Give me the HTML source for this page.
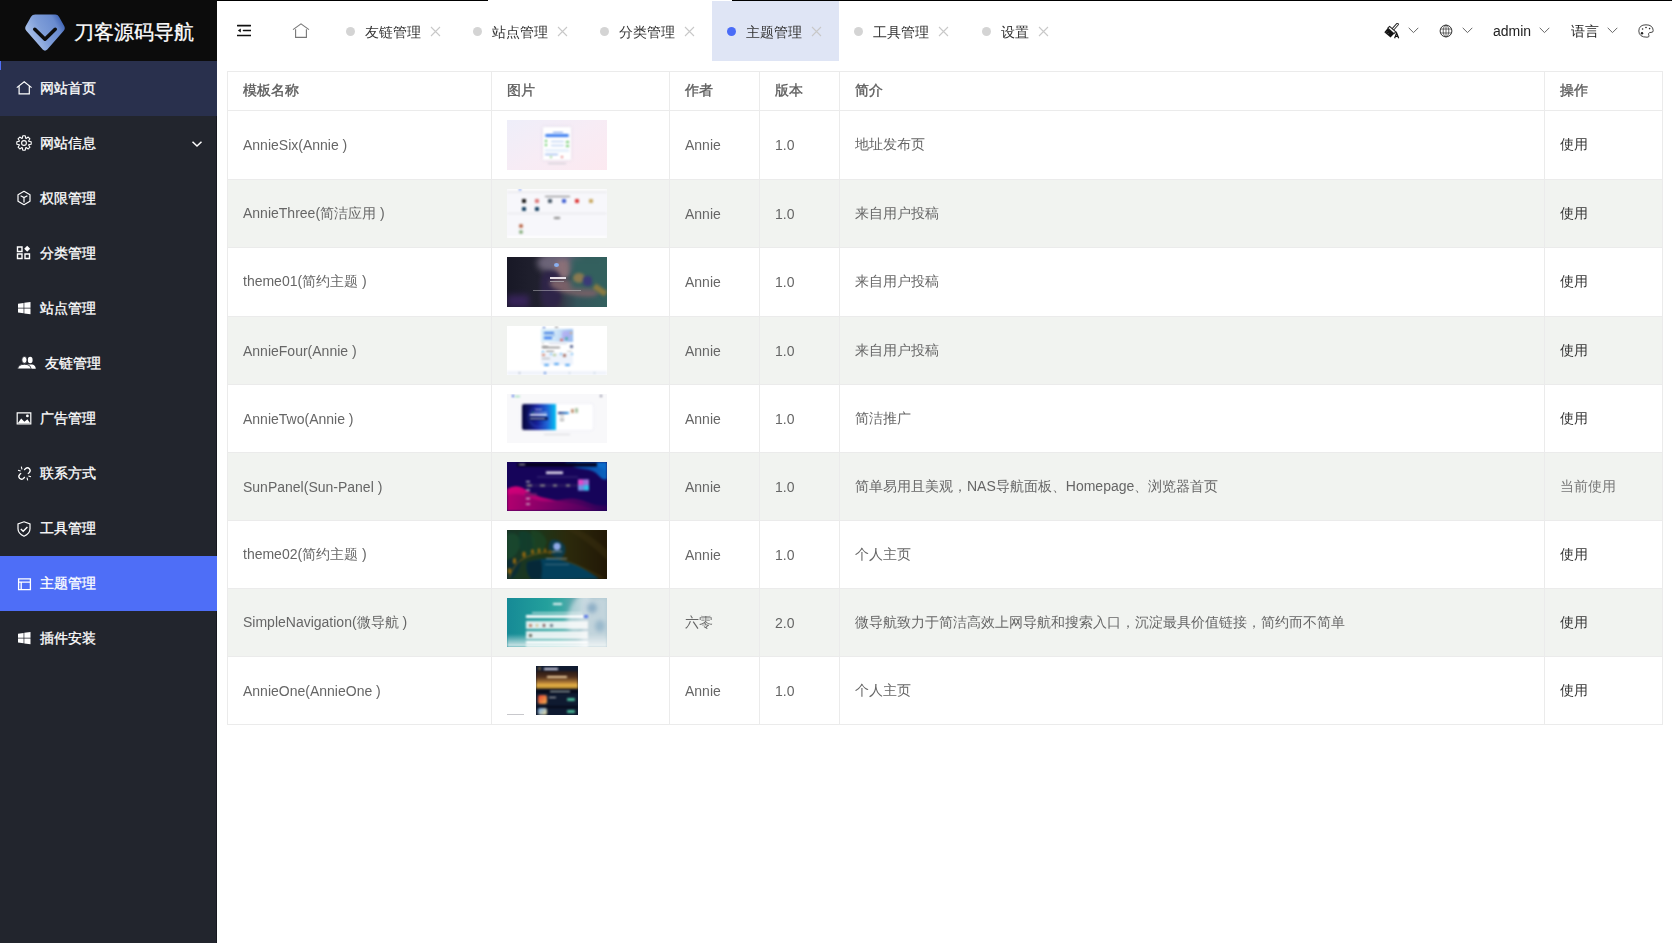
<!DOCTYPE html>
<html><head><meta charset="utf-8">
<style>
*{box-sizing:border-box;margin:0;padding:0}
html,body{width:1672px;height:943px;overflow:hidden;background:#fff;font-family:"Liberation Sans",sans-serif;font-size:14px}
#side{position:absolute;left:0;top:0;width:217px;height:943px;background:#22252d}
#logo{position:absolute;left:0;top:0;width:217px;height:61px;background:#0c0c0c}
#logo .t{position:absolute;left:74px;top:20px;font-size:20px;line-height:24px;color:#fff;white-space:nowrap;-webkit-text-stroke:0.3px #fff}
.mi{position:absolute;left:0;width:217px;height:55px;color:#fff;font-size:14px}
.mi .tx{position:absolute;left:40px;top:18px;line-height:18px;white-space:nowrap;-webkit-text-stroke:0.3px #fff}
.mi svg{position:absolute}
.topline{position:absolute;top:0;height:1px;background:#000}
#hdr{position:absolute;left:217px;top:0;width:1455px;height:61px;will-change:transform}
.tab{position:absolute;top:1px;height:60px;width:127px}
.tab .dot{position:absolute;left:15px;top:26px;width:9px;height:9px;border-radius:50%;background:#d4d4d4}
.tab .tt{position:absolute;left:34px;top:21.5px;line-height:18px;color:#333;white-space:nowrap}
.tab svg{position:absolute;left:99px;top:25px}
#tw{position:absolute;left:227px;top:71px;will-change:transform}
table{border-collapse:collapse;table-layout:fixed}
td,th{border:1px solid #ebebeb;text-align:left;padding:0 15px;color:#666;font-weight:normal;white-space:nowrap}
th{height:39px;font-weight:normal;-webkit-text-stroke:0.35px #5c5c5c}
td{height:68px}
tr.h69 td{height:69px}
tr.s td{background:#f1f3f0}

td.u{color:#333}
td.c{color:#777}
th{color:#5c5c5c}
.th{position:relative;display:block;width:100px;height:50px;overflow:hidden}
.th i{position:absolute;display:block;filter:blur(.85px)}
.t1{background:linear-gradient(150deg,#eeeef9 0%,#f7ecf5 50%,#fce9f0 100%)}
.t2{height:49px;background:#f7f7fb}
.t3{background:linear-gradient(90deg,#181826 0%,#20202e 30%,#343042 50%,#34545a 70%,#33605e 100%)}
.t4{height:49px;background:#fff}
.t5{height:49px;background:#f8f8fa}
.t6{height:49px;background:#17045c}
.t7{height:49px;background:radial-gradient(ellipse 35px 20px at 50% 85%,#044060 0%,rgba(4,64,96,0) 100%),linear-gradient(100deg,#1a3020 0%,#24321a 30%,#2e2a0c 60%,#231a06 100%)}
.t8{height:49px;background:linear-gradient(90deg,#168a96 0%,#23a09c 40%,#3aa8a4 55%,#6aa8b0 68%,#a8c4cc 80%,#b0c8d0 100%)}
.t9w{position:relative;width:100px;height:49px}
.t9{position:absolute;left:29px;top:0;width:42px;height:49px;background:#0f1a30;overflow:hidden}
.t9 i{position:absolute;display:block;filter:blur(.85px)}

</style></head><body>
<div id="side">
  <div style="position:absolute;left:216px;top:61px;width:1px;height:882px;background:#16181f"></div>
  <div id="logo">
    <svg style="position:absolute;left:25px;top:14px" width="41" height="38" viewBox="0 0 41 38"><defs><linearGradient id="lg" x1="0" y1="0.85" x2="1" y2="0.35"><stop offset="0" stop-color="#c0d4f4"/><stop offset="0.5" stop-color="#7e9dd8"/><stop offset="0.85" stop-color="#6a8cd0"/><stop offset="1" stop-color="#4468b8"/></linearGradient></defs><path d="M10.2 0.6 H30.3 Q32.8 0.6 34 2.8 L39.2 12 Q40.6 14.6 38.7 16.8 L22.3 35.5 Q20 37.8 17.7 35.5 L1.3 16.8 Q-0.6 14.6 0.8 12 L6 2.8 Q7.4 0.6 10.2 0.6Z" fill="url(#lg)"/><path d="M9.8 15.3 L20 25.2 L30.2 15.3" fill="none" stroke="#0c0c0c" stroke-width="3.6" stroke-linecap="round" stroke-linejoin="round"/></svg>
    <div class="t">刀客源码导航</div>
  </div>
  <div class="mi" style="top:61px;background:#29304d"><div style="position:absolute;left:0;top:0;width:1px;height:9px;background:#4f6ef7"></div>
    <svg style="left:16px;top:19px" width="17" height="16" viewBox="0 0 17 16"><path d="M0.8 7.6 L8.2 1.8 L15.6 7.6 M3.1 6.2 V13.9 H13.3 V6.2" fill="none" stroke="#fff" stroke-width="1.2"/></svg>
    <div class="tx">网站首页</div></div>
  <div class="mi" style="top:116px">
    <svg style="left:16px;top:19px" width="16" height="16" viewBox="0 0 16 16"><circle cx="8" cy="8" r="2.4" fill="none" stroke="#fff" stroke-width="1.1"/><path d="M6.24 3.32 L6.76 0.81 L9.24 0.81 L9.76 3.32 L10.06 3.45 L12.21 2.04 L13.96 3.79 L12.55 5.94 L12.68 6.24 L15.19 6.76 L15.19 9.24 L12.68 9.76 L12.55 10.06 L13.96 12.21 L12.21 13.96 L10.06 12.55 L9.76 12.68 L9.24 15.19 L6.76 15.19 L6.24 12.68 L5.94 12.55 L3.79 13.96 L2.04 12.21 L3.45 10.06 L3.32 9.76 L0.81 9.24 L0.81 6.76 L3.32 6.24 L3.45 5.94 L2.04 3.79 L3.79 2.04 L5.94 3.45Z" fill="none" stroke="#fff" stroke-width="1.1" stroke-linejoin="round"/></svg>
    <div class="tx">网站信息</div>
    <svg style="left:191px;top:24px" width="12" height="8" viewBox="0 0 12 8"><path d="M1.5 1.8 L6 6 L10.5 1.8" fill="none" stroke="#fff" stroke-width="1.5"/></svg></div>
  <div class="mi" style="top:171px">
    <svg style="left:16px;top:19px" width="16" height="16" viewBox="0 0 16 16"><path d="M8 1.3 L14 4.7 V11.3 L8 14.7 L2 11.3 V4.7Z" fill="none" stroke="#fff" stroke-width="1.2" stroke-linejoin="round"/><path d="M4.6 5.8 L8 7.6 L11.4 5.8 M8 7.6 V12.6" fill="none" stroke="#fff" stroke-width="1.2"/></svg>
    <div class="tx">权限管理</div></div>
  <div class="mi" style="top:226px">
    <svg style="left:16px;top:19px" width="16" height="16" viewBox="0 0 16 16"><path d="M1.5 2 H6 V6.5 H1.5Z M1.5 9 H6 V13.5 H1.5Z M9 9 H13.5 V13.5 H9Z" fill="none" stroke="#fff" stroke-width="1.4"/><path d="M11.2 0.8 L14.2 3.8 L11.2 6.8 L8.2 3.8Z" fill="#fff"/></svg>
    <div class="tx">分类管理</div></div>
  <div class="mi" style="top:281px">
    <svg style="left:18px;top:21px" width="13" height="13" viewBox="0 0 13 13"><path d="M0 1.7 L5.6 0.9 V5.8 H0Z M6.3 0.8 L12.5 0 V5.8 H6.3Z M0 6.5 H5.6 V11.3 L0 10.6Z M6.3 6.5 H12.5 V12.3 L6.3 11.4Z" fill="#fff"/></svg>
    <div class="tx">站点管理</div></div>
  <div class="mi" style="top:336px">
    <svg style="left:17px;top:20px" width="20" height="14" viewBox="0 0 20 14"><ellipse cx="13.2" cy="4" rx="2.4" ry="3.3" fill="#fff"/><path d="M11 8.6 Q13.2 8.2 15.4 8.6 Q18.6 9.4 18.8 12.8 H13Z" fill="#fff"/><ellipse cx="7.4" cy="3.9" rx="2.6" ry="3.4" fill="#fff" stroke="#22252d" stroke-width="0.8"/><path d="M0.6 12.9 Q0.9 9.4 4.6 8.6 Q7.4 8 10.2 8.6 Q13.9 9.4 14.2 12.9Z" fill="#fff" stroke="#22252d" stroke-width="0.8"/></svg>
    <div class="tx" style="left:45px">友链管理</div></div>
  <div class="mi" style="top:391px">
    <svg style="left:16px;top:21px" width="16" height="13" viewBox="0 0 16 13"><path d="M1.2 0.9 H14.8 V12 H1.2Z" fill="none" stroke="#fff" stroke-width="1.2"/><path d="M1.6 11.6 L5.2 6.4 L8.4 9.8 L11.4 7.2 L14.4 11.6Z" fill="#fff"/><circle cx="11.4" cy="3.9" r="1.4" fill="#fff"/></svg>
    <div class="tx">广告管理</div></div>
  <div class="mi" style="top:446px">
    <svg style="left:17px;top:20px" width="15" height="15" viewBox="0 0 15 15"><path d="M7.2 4 L8.6 2.6 Q10.6 0.9 12.4 2.7 Q14.1 4.6 12.3 6.5 L10.9 7.9 M7.8 11 L6.4 12.4 Q4.4 14.1 2.6 12.3 Q0.9 10.4 2.7 8.5 L4.1 7.1" fill="none" stroke="#fff" stroke-width="1.3"/><path d="M1 4.2 L3.6 5 M4.3 0.6 L5 3.3 M14 10.8 L11.4 10 M10.7 14.4 L10 11.7" stroke="#fff" stroke-width="1.1"/></svg>
    <div class="tx">联系方式</div></div>
  <div class="mi" style="top:501px">
    <svg style="left:17px;top:20px" width="14" height="16" viewBox="0 0 14 16"><path d="M7 0.8 L13 2.9 V7.8 Q13 12.6 7 15.2 Q1 12.6 1 7.8 V2.9Z" fill="none" stroke="#fff" stroke-width="1.2"/><path d="M3.8 8 L6.2 10.3 L10.4 6" fill="none" stroke="#fff" stroke-width="1.4"/></svg>
    <div class="tx">工具管理</div></div>
  <div class="mi" style="top:556px;background:#4e6ef7">
    <svg style="left:17px;top:22px" width="15" height="13" viewBox="0 0 15 13"><path d="M1.6 0.9 H13.4 V11.6 H1.6Z M1.6 4.2 H13.4 M4.2 4.2 V11.6" fill="none" stroke="#fff" stroke-width="1.3"/></svg>
    <div class="tx">主题管理</div></div>
  <div class="mi" style="top:611px">
    <svg style="left:18px;top:21px" width="13" height="13" viewBox="0 0 13 13"><path d="M0 1.7 L5.6 0.9 V5.8 H0Z M6.3 0.8 L12.5 0 V5.8 H6.3Z M0 6.5 H5.6 V11.3 L0 10.6Z M6.3 6.5 H12.5 V12.3 L6.3 11.4Z" fill="#fff"/></svg>
    <div class="tx">插件安装</div></div>
</div>

<div class="topline" style="left:217px;width:271px"></div>
<div class="topline" style="left:732px;width:940px"></div>

<!-- HEADER -->
<div id="hdr">
  <svg style="position:absolute;left:20px;top:24px" width="14" height="13" viewBox="0 0 14 13"><path d="M0.5 1.6 H13.5 M6.5 6.5 H13.5 M0.5 11.5 H13.5" stroke="#111" stroke-width="1.6" stroke-linecap="round"/><path d="M0.8 6.5 L3.8 4.6 V8.4Z" fill="#111"/></svg>
  <svg style="position:absolute;left:75px;top:23px" width="18" height="16" viewBox="0 0 18 16"><path d="M1 6.6 L9 0.9 L17 6.6 M3.6 6.2 V14.4 H14.4 V6.2" fill="none" stroke="#777" stroke-width="1.1"/></svg>
  <div class="tab" style="left:114px"><div class="dot"></div><div class="tt">友链管理</div><svg width="11" height="11" viewBox="0 0 11 11"><path d="M1 1 L10 10 M10 1 L1 10" stroke="#c8c8c8" stroke-width="1.1"/></svg></div>
  <div class="tab" style="left:241px"><div class="dot"></div><div class="tt">站点管理</div><svg width="11" height="11" viewBox="0 0 11 11"><path d="M1 1 L10 10 M10 1 L1 10" stroke="#c8c8c8" stroke-width="1.1"/></svg></div>
  <div class="tab" style="left:368px"><div class="dot"></div><div class="tt">分类管理</div><svg width="11" height="11" viewBox="0 0 11 11"><path d="M1 1 L10 10 M10 1 L1 10" stroke="#c8c8c8" stroke-width="1.1"/></svg></div>
  <div class="tab" style="left:495px;background:#dfe5f5"><div class="dot" style="background:#4a6cf7"></div><div class="tt">主题管理</div><svg width="11" height="11" viewBox="0 0 11 11"><path d="M1 1 L10 10 M10 1 L1 10" stroke="#c8c8c8" stroke-width="1.1"/></svg></div>
  <div class="tab" style="left:622px"><div class="dot"></div><div class="tt">工具管理</div><svg width="11" height="11" viewBox="0 0 11 11"><path d="M1 1 L10 10 M10 1 L1 10" stroke="#c8c8c8" stroke-width="1.1"/></svg></div>
  <!-- right tools -->
  <svg style="position:absolute;left:1167px;top:23px" width="17" height="17" viewBox="0 0 17 17"><path d="M13.4 1.3 L9.4 5.8" stroke="#222" stroke-width="2.9" stroke-linecap="round"/><path d="M13.4 1.3 L9.4 5.8" stroke="#fff" stroke-width="1.1" stroke-linecap="round"/><path d="M5.6 3.4 L11.8 8.8 L10 10.6 L3.8 5.2Z" fill="#fff" stroke="#222" stroke-width="1.1" stroke-linejoin="round"/><path d="M3.6 5.2 L10.1 10.8 L6.5 14.6 L0.3 9.2Z" fill="#111"/><path d="M2 9.6 L3.2 8.3 M3.7 11.1 L4.8 9.8" stroke="#888" stroke-width="0.6"/><path d="M10.6 15.2 L12.6 10 L14.7 15.2 M11.4 13.4 H13.9" fill="none" stroke="#111" stroke-width="1.2"/></svg>
  <svg style="position:absolute;left:1191px;top:27px" width="11" height="7" viewBox="0 0 11 7"><path d="M0.7 0.8 L5.5 5.6 L10.3 0.8" fill="none" stroke="#666" stroke-width="1"/></svg>
  <svg style="position:absolute;left:1222px;top:24px" width="14" height="14" viewBox="0 0 14 14"><circle cx="7" cy="7" r="5.9" fill="none" stroke="#333" stroke-width="1"/><ellipse cx="7" cy="7" rx="2.8" ry="5.9" fill="none" stroke="#444" stroke-width="0.8"/><path d="M1.3 5 H12.7 M1.3 9 H12.7 M7 1 V13" stroke="#444" stroke-width="0.8"/></svg>
  <svg style="position:absolute;left:1245px;top:27px" width="11" height="7" viewBox="0 0 11 7"><path d="M0.7 0.8 L5.5 5.6 L10.3 0.8" fill="none" stroke="#666" stroke-width="1"/></svg>
  <div style="position:absolute;left:1276px;top:22px;line-height:18px;font-size:14px;color:#222">admin</div>
  <svg style="position:absolute;left:1322px;top:27px" width="11" height="7" viewBox="0 0 11 7"><path d="M0.7 0.8 L5.5 5.6 L10.3 0.8" fill="none" stroke="#666" stroke-width="1"/></svg>
  <div style="position:absolute;left:1354px;top:22px;line-height:18px;font-size:14px;color:#222">语言</div>
  <svg style="position:absolute;left:1390px;top:27px" width="11" height="7" viewBox="0 0 11 7"><path d="M0.7 0.8 L5.5 5.6 L10.3 0.8" fill="none" stroke="#666" stroke-width="1"/></svg>
  <svg style="position:absolute;left:1421px;top:24px" width="16" height="14" viewBox="0 0 16 14"><path d="M8 0.8 Q14.8 0.8 15.2 6.5 Q15.3 8.6 13 8.4 Q11 8.3 10.6 9.6 Q10.4 11 11 11.8 Q11.4 13.2 9 13.2 Q1 13.2 0.8 7 Q1 0.8 8 0.8Z" fill="none" stroke="#333" stroke-width="0.9"/><circle cx="4" cy="9.2" r="1.2" fill="#222"/><circle cx="4.6" cy="5" r="0.8" fill="#222"/><circle cx="8" cy="3.5" r="0.8" fill="#222"/><circle cx="11.6" cy="4.6" r="0.8" fill="#222"/></svg>
  <div class="tab" style="left:750px"><div class="dot"></div><div class="tt">设置</div><svg style="left:71px" width="11" height="11" viewBox="0 0 11 11"><path d="M1 1 L10 10 M10 1 L1 10" stroke="#c8c8c8" stroke-width="1.1"/></svg></div>
</div>

<!-- TABLE -->
<div id="tw"><table>
<colgroup><col style="width:264px"><col style="width:178px"><col style="width:90px"><col style="width:80px"><col style="width:705px"><col style="width:118px"></colgroup>
<tr><th>模板名称</th><th>图片</th><th>作者</th><th>版本</th><th>简介</th><th>操作</th></tr>
<tr class="h69"><td>AnnieSix(Annie )</td><td><div class="th t1"><i style="left:36px;top:7px;width:28px;height:33px;background:#fff;box-shadow:0 0 2px rgba(180,180,200,.5)"></i><i style="left:46px;top:11.5px;width:10px;height:1.5px;background:#5b8ae8"></i><i style="left:38px;top:14px;width:24px;height:3px;background:#3d7ef0;border-radius:2px"></i><i style="left:38px;top:19.5px;width:2px;height:2px;background:#5cc85c"></i><i style="left:44px;top:20.5px;width:13px;height:1px;background:#a8c4f0"></i><i style="left:59px;top:20.5px;width:3px;height:2px;background:#6cc86c"></i><i style="left:38px;top:24px;width:2px;height:2px;background:#5cc85c"></i><i style="left:44px;top:25px;width:13px;height:1px;background:#a8c4f0"></i><i style="left:59px;top:24.5px;width:3px;height:2px;background:#6cc86c"></i><i style="left:38px;top:28.5px;width:24px;height:3px;background:#e6f0fc"></i><i style="left:38px;top:33.5px;width:13px;height:1px;background:#7aa2ea"></i><i style="left:43px;top:36px;width:2px;height:2px;background:#9ad49a"></i><i style="left:54px;top:36px;width:2px;height:2px;background:#e88080"></i><i style="left:41px;top:42.5px;width:18px;height:1px;background:#c8c8d0"></i></div></td><td>Annie</td><td>1.0</td><td>地址发布页</td><td class="u">使用</td></tr>
<tr class="s"><td>AnnieThree(简洁应用 )</td><td><div class="th t2"><i style="left:0;top:0;width:100px;height:2px;background:#fff"></i><i style="left:12px;top:0;width:2px;height:2px;background:#4a7af0"></i><i style="left:0;top:2px;width:100px;height:2px;background:#ededf0"></i><i style="left:38px;top:6.5px;width:25px;height:1.5px;background:#777"></i><i style="left:15px;top:10px;width:4px;height:4px;background:#111;border-radius:1px"></i><i style="left:28px;top:10px;width:4px;height:4px;background:#d77;border-radius:1px"></i><i style="left:41px;top:10px;width:4px;height:4px;background:#456;border-radius:1px"></i><i style="left:55px;top:10px;width:4px;height:4px;background:#3b5bd0;border-radius:1px"></i><i style="left:68px;top:10px;width:4px;height:4px;background:#d33;border-radius:1px"></i><i style="left:82px;top:10px;width:4px;height:4px;background:#c9a860;border-radius:1px"></i><i style="left:15px;top:17.5px;width:4px;height:4px;background:#0d3a5c;border-radius:1px"></i><i style="left:28px;top:17.5px;width:4px;height:4px;background:#0d3a5c;border-radius:1px"></i><i style="left:0;top:23.5px;width:100px;height:1.5px;background:#e6e6ea"></i><i style="left:47px;top:28px;width:6px;height:1.5px;background:#888"></i><i style="left:12px;top:34.5px;width:4px;height:4px;background:#b86040;border-radius:50%"></i><i style="left:12px;top:40.5px;width:4px;height:4px;background:#8ab080;border-radius:50%"></i><i style="left:0;top:47px;width:100px;height:2px;background:#fff"></i></div></td><td>Annie</td><td>1.0</td><td>来自用户投稿</td><td class="u">使用</td></tr>
<tr class="h69"><td>theme01(简约主题 )</td><td><div class="th t3"><i style="left:30px;top:-5px;width:45px;height:22px;background:#6c6478;border-radius:50%;filter:blur(3px)"></i><i style="left:48px;top:3px;width:16px;height:18px;background:#8a7078;border-radius:40%;filter:blur(2px)"></i><i style="left:34px;top:14px;width:20px;height:36px;background:#2e2448;border-radius:30%;filter:blur(2px)"></i><i style="left:42px;top:24px;width:50px;height:14px;background:#7a6068;border-radius:50%;transform:rotate(12deg);filter:blur(2px)"></i><i style="left:64px;top:0;width:36px;height:32px;background:#33605e;filter:blur(3px)"></i><i style="left:66px;top:16px;width:12px;height:10px;background:#8a7a50;border-radius:50%;filter:blur(1.5px)"></i><i style="left:76px;top:19px;width:9px;height:10px;background:#3a3a78;border-radius:40%;filter:blur(1.5px)"></i><i style="left:86px;top:30px;width:14px;height:6px;background:#8a7a40;transform:rotate(35deg);filter:blur(1.5px)"></i><i style="left:47px;top:6px;width:5px;height:4px;background:#8ab0f0;border-radius:50%;filter:blur(.6px)"></i><i style="left:43px;top:20px;width:16px;height:2px;background:#e8e0e8;filter:blur(.5px)"></i><i style="left:43px;top:23.5px;width:14px;height:1px;background:#a098a0;filter:blur(.5px)"></i><i style="left:26px;top:33px;width:48px;height:1px;background:rgba(255,255,255,.35);filter:blur(.4px)"></i><i style="left:0;top:38px;width:22px;height:12px;background:#4a2a7a;opacity:.6;filter:blur(3px)"></i></div></td><td>Annie</td><td>1.0</td><td>来自用户投稿</td><td class="u">使用</td></tr>
<tr class="s"><td>AnnieFour(Annie )</td><td><div class="th t4"><i style="left:35.5px;top:0.5px;width:2px;height:2px;background:#5a7ad0"></i><i style="left:48px;top:1px;width:3px;height:1px;background:#555"></i><i style="left:34px;top:3px;width:32px;height:12.5px;background:linear-gradient(100deg,#d8eefa 0%,#cfe6f8 45%,#b8d4f4 70%,#90b8f0 100%)"></i><i style="left:37px;top:5.5px;width:10px;height:2px;background:#3d7ae0"></i><i style="left:37px;top:8.5px;width:11px;height:1px;background:#7aa8e8"></i><i style="left:37px;top:11px;width:8px;height:2px;background:#2a70f0"></i><i style="left:55px;top:5px;width:8px;height:9px;background:#b0a0f0;opacity:.6;border-radius:2px"></i><i style="left:58px;top:11px;width:3px;height:3px;background:#3ab0a0;border-radius:50%"></i><i style="left:53px;top:12.5px;width:2.5px;height:2.5px;background:#e05040;border-radius:50%"></i><i style="left:63px;top:6px;width:2px;height:2px;background:#f0a050;border-radius:50%"></i><i style="left:35px;top:17px;width:2px;height:1px;background:#bbb"></i><i style="left:42px;top:17px;width:18px;height:1px;background:#c8d0e0"></i><i style="left:35px;top:19.5px;width:6px;height:1px;background:#888"></i><i style="left:35px;top:21px;width:18px;height:1.2px;background:#555"></i><i style="left:63px;top:19px;width:2.5px;height:3px;background:#3a4a80;border-radius:50%"></i><i style="left:35px;top:24.5px;width:2px;height:2px;background:#5ab0f0"></i><i style="left:38.5px;top:25px;width:8px;height:1px;background:#666"></i><i style="left:60px;top:25px;width:5px;height:1px;background:#bbb"></i><i style="left:34px;top:26.5px;width:32px;height:12.5px;background:#eef3fc"></i><i style="left:35px;top:27.5px;width:2.5px;height:2.5px;background:#d07050;border-radius:50%"></i><i style="left:45.5px;top:28px;width:3px;height:2px;background:#b0c890"></i><i style="left:56px;top:28px;width:2.5px;height:2.5px;background:#a06050;border-radius:50%"></i><i style="left:43px;top:26.5px;width:2px;height:2px;background:#5ab0f0;border-radius:50%"></i><i style="left:53px;top:26.5px;width:2px;height:2px;background:#5ab0f0;border-radius:50%"></i><i style="left:64px;top:26.5px;width:2px;height:2px;background:#5ab0f0;border-radius:50%"></i><i style="left:35px;top:32px;width:8px;height:1px;background:#aaa"></i><i style="left:37px;top:37.5px;width:5px;height:2px;background:#4aa0f0;border-radius:1px"></i><i style="left:47px;top:37px;width:5px;height:2px;background:#4aa0f0;border-radius:1px"></i><i style="left:58px;top:37.5px;width:5px;height:2px;background:#4aa0f0;border-radius:1px"></i><i style="left:0;top:45px;width:100px;height:4px;background:#f0f3fb"></i><i style="left:12px;top:46px;width:1px;height:2px;background:#9ab"></i><i style="left:37px;top:46px;width:1.5px;height:2px;background:#5a8ae0"></i><i style="left:62px;top:46px;width:1px;height:2px;background:#bcd"></i><i style="left:87px;top:46px;width:1px;height:2px;background:#bcd"></i></div></td><td>Annie</td><td>1.0</td><td>来自用户投稿</td><td class="u">使用</td></tr>
<tr><td>AnnieTwo(Annie )</td><td><div class="th t5"><i style="left:5px;top:0.5px;width:2px;height:2px;background:#3a60e0"></i><i style="left:8px;top:1.5px;width:5px;height:1.5px;background:#7ad8a0"></i><i style="left:93px;top:1px;width:1.5px;height:1.5px;background:#889"></i><i style="left:15px;top:9.5px;width:71px;height:26.5px;background:#fff;border-radius:2px;box-shadow:0 0 2px rgba(200,200,230,.6)"></i><i style="left:15px;top:9.5px;width:34px;height:26.5px;border-radius:2px 0 0 2px;background:radial-gradient(circle at 50% 50%,rgba(40,60,180,.0) 0,rgba(40,60,180,0) 8px,rgba(60,90,220,.35) 10px,rgba(40,60,180,0) 12px),linear-gradient(90deg,#06063a 0%,#16209a 45%,#1a6ad8 75%,#04c4f4 100%)"></i><i style="left:28px;top:14.5px;width:7px;height:1.2px;background:#b8c8f0"></i><i style="left:25px;top:17.5px;width:1.5px;height:1.5px;background:#40d090"></i><i style="left:27px;top:17.5px;width:13px;height:1px;background:#9ab0e8"></i><i style="left:23px;top:19.5px;width:17px;height:2px;background:#f0f4ff"></i><i style="left:21px;top:22.5px;width:20px;height:3px;background:#0a1450;border-radius:2px"></i><i style="left:23px;top:23.5px;width:15px;height:1px;background:#c8d0f0"></i><i style="left:51px;top:17.5px;width:11px;height:2.5px;border-radius:2px;background:linear-gradient(90deg,#0a1060,#30a0f0)"></i><i style="left:53px;top:21px;width:4px;height:1px;background:#999"></i><i style="left:53px;top:23.5px;width:4px;height:1px;background:#999"></i><i style="left:53px;top:26px;width:4px;height:1px;background:#888"></i><i style="left:63.5px;top:14.5px;width:3.5px;height:4px;background:#c09070;border-radius:1px"></i><i style="left:67.5px;top:14px;width:3.5px;height:4.5px;background:#a8c0a0;border-radius:1px"></i><i style="left:37px;top:40px;width:26px;height:1px;background:#d8d8de"></i></div></td><td>Annie</td><td>1.0</td><td>简洁推广</td><td class="u">使用</td></tr>
<tr class="s"><td>SunPanel(Sun-Panel )</td><td><div class="th t6"><svg width="100" height="49" viewBox="0 0 100 49" style="position:absolute;left:0;top:0;filter:blur(.85px)"><defs><linearGradient id="pk" x1="0" y1="0" x2="1" y2="1"><stop offset="0" stop-color="#d8007a"/><stop offset="1" stop-color="#7a0068"/></linearGradient><linearGradient id="pk2" x1="0" y1="0" x2="1" y2="0"><stop offset="0" stop-color="#b0006e"/><stop offset="1" stop-color="#30005a"/></linearGradient><linearGradient id="bl" x1="0" y1="0" x2="1" y2="0"><stop offset="0" stop-color="#0a3a98"/><stop offset="1" stop-color="#0a64c0"/></linearGradient></defs><rect width="100" height="49" fill="#16045a"/><path d="M58 0 Q66 6 76 7 Q88 8 92 14 Q96 19 100 17 V0Z" fill="url(#bl)"/><path d="M68 0 Q74 3 82 3 Q92 4 100 9 V0Z" fill="#0a6ac8"/><path d="M0 27 Q8 22 16 26 Q24 32 34 35 Q46 38 58 40 Q72 42 80 45 Q90 49 100 49 H0Z" fill="url(#pk)"/><path d="M0 33 Q12 30 24 36 Q36 42 52 38 Q68 34 80 40 Q92 45 100 43 V49 H0Z" fill="url(#pk2)" opacity=".85"/><rect x="10" y="1" width="80" height="3.5" fill="#04001a"/><rect x="12" y="2" width="6" height="1" fill="#ccc"/><rect x="39" y="9.5" width="17" height="2.5" fill="#e8e0f0"/><rect x="30" y="14" width="41" height="2" fill="#2a1a6a"/><rect x="18" y="22" width="53" height="3" fill="#2a1a60" opacity=".8"/><rect x="20" y="22.5" width="5" height="2" fill="#888"/><rect x="33" y="22.5" width="5" height="2" fill="#888"/><rect x="46" y="22.5" width="4" height="2" fill="#888"/><rect x="59" y="22.5" width="4" height="2" fill="#888"/><rect x="18" y="31" width="12" height="3" fill="#6a1a6a" opacity=".8"/><rect x="19" y="19" width="4" height="1.2" fill="#ccc"/><rect x="19" y="27.5" width="4" height="1.2" fill="#ddd"/><rect x="19" y="36" width="4" height="1.2" fill="#ddd"/><rect x="19" y="41.5" width="4" height="1.2" fill="#ddd"/><rect x="71" y="17.5" width="11" height="11" rx="1" fill="#8a70d8"/><rect x="71" y="17.5" width="5.3" height="5.3" fill="#e048c8"/><rect x="76.7" y="17.5" width="5.3" height="5.3" fill="#a070d8"/><rect x="71" y="23.2" width="5.3" height="5.3" fill="#7090e0"/><rect x="76.7" y="23.2" width="5.3" height="5.3" fill="#30c0e8"/></svg></div></td><td>Annie</td><td>1.0</td><td>简单易用且美观，NAS导航面板、Homepage、浏览器首页</td><td class="c">当前使用</td></tr>
<tr><td>theme02(简约主题 )</td><td><div class="th t7"><svg width="100" height="49" viewBox="0 0 100 49" style="position:absolute;left:0;top:0;filter:blur(.85px)"><defs><linearGradient id="g7" x1="0" y1="0" x2="1" y2="0"><stop offset="0" stop-color="#16382a"/><stop offset=".35" stop-color="#1e3418"/><stop offset=".6" stop-color="#2c2a0c"/><stop offset="1" stop-color="#221806"/></linearGradient></defs><rect width="100" height="49" fill="url(#g7)"/><path d="M0 5 Q10 0 14 12 Q12 26 0 30Z" fill="#1a4a30" opacity=".8"/><path d="M12 2 Q22 -2 28 10 Q28 24 18 28 Q10 20 12 2Z" fill="#104030" opacity=".7"/><path d="M24 0 Q36 0 40 12 Q36 24 28 26 Q24 14 24 0Z" fill="#1a4a28" opacity=".6"/><path d="M0 30 Q8 26 14 32 Q12 44 4 49 H0Z" fill="#0a2a38" opacity=".8"/><path d="M20 32 Q36 27 50 29 Q68 32 82 42 Q90 47 92 49 H24 Q18 42 20 32Z" fill="#03405c"/><path d="M20 32 Q28 30 34 30 Q36 40 34 49 H24 Q18 42 20 32Z" fill="#062838"/><path d="M44 10 Q52 8 58 16 Q60 24 54 28 Q44 28 42 20 Q41 14 44 10Z" fill="#0a3c50" opacity=".9"/><path d="M60 0 Q80 10 100 30 V20 Q85 6 72 0Z" fill="#3a3010" opacity=".5"/><path d="M2 48 Q6 36 14 30 Q26 22 48 22" fill="none" stroke="#7a5a10" stroke-width="1"/><ellipse cx="2.5" cy="41" rx="1.8" ry="3" fill="#8a6410"/><ellipse cx="7.5" cy="31" rx="1.8" ry="3" fill="#8a6410"/><ellipse cx="17" cy="24.5" rx="1.8" ry="3" fill="#8a6410"/><ellipse cx="25.5" cy="21.5" rx="1.6" ry="2.6" fill="#8a6410"/><ellipse cx="32" cy="20.5" rx="1.5" ry="2.5" fill="#8a6410"/><ellipse cx="38" cy="20.5" rx="1.4" ry="2.3" fill="#7a5a10"/><ellipse cx="43" cy="22" rx="1.3" ry="2.2" fill="#6a5010"/><path d="M50 28 Q70 34 96 48" fill="none" stroke="#5a4810" stroke-width="1" opacity=".7"/><circle cx="50" cy="16.5" r="3.7" fill="#90aae8"/><rect x="45" y="21" width="10" height="1" fill="#a0b0c0" opacity=".8"/><rect x="39" y="28" width="21" height="1.2" fill="#90a8b8" opacity=".7"/><rect x="38" y="34" width="24" height="1" fill="#6a8a9a" opacity=".6"/></svg></div></td><td>Annie</td><td>1.0</td><td>个人主页</td><td class="u">使用</td></tr>
<tr class="s"><td>SimpleNavigation(微导航 )</td><td><div class="th t8"><i style="left:62px;top:-5px;width:20px;height:40px;background:#e8f0f4;opacity:.55;border-radius:50%;transform:rotate(20deg);filter:blur(2px)"></i><i style="left:75px;top:0;width:25px;height:49px;background:#c8d8e0;opacity:.8;filter:blur(2px)"></i><i style="left:80px;top:5px;width:10px;height:10px;background:#5a8ab0;opacity:.5;border-radius:50%;filter:blur(2px)"></i><i style="left:88px;top:22px;width:10px;height:12px;background:#6a98b8;opacity:.45;border-radius:50%;filter:blur(2px)"></i><i style="left:0;top:36px;width:100px;height:13px;background:linear-gradient(180deg,rgba(255,255,255,0),rgba(245,248,248,.9))"></i><i style="left:46px;top:5px;width:9px;height:2px;background:#e8f4f4"></i><i style="left:25px;top:13.5px;width:50px;height:2px;background:rgba(230,240,240,.6)"></i><i style="left:19px;top:17px;width:58px;height:2.5px;background:#fff"></i><i style="left:77px;top:16.5px;width:4px;height:3px;background:#5a78e8"></i><i style="left:19px;top:23px;width:62px;height:7.5px;background:rgba(248,250,250,.9)"></i><i style="left:22px;top:26px;width:3px;height:3px;background:#b06040;border-radius:50%"></i><i style="left:29px;top:26px;width:2px;height:3px;background:#d0c090"></i><i style="left:36px;top:26px;width:2px;height:3px;background:#704040"></i><i style="left:43px;top:26px;width:3px;height:3px;background:#506070;border-radius:50%"></i><i style="left:19px;top:33px;width:62px;height:8px;background:rgba(248,250,250,.9)"></i><i style="left:22px;top:36px;width:3px;height:3px;background:#443;border-radius:50%"></i><i style="left:19px;top:42.5px;width:62px;height:3px;background:#fff"></i><i style="left:19px;top:47px;width:62px;height:2px;background:#fff"></i></div></td><td>六零</td><td>2.0</td><td>微导航致力于简洁高效上网导航和搜索入口，沉淀最具价值链接，简约而不简单</td><td class="u">使用</td></tr>
<tr><td>AnnieOne(AnnieOne )</td><td><div class="t9w"><div class="t9"><i style="left:0;top:5px;width:42px;height:19px;background:linear-gradient(180deg,#2a1a16 0%,#4a2c1c 30%,#9a6a30 55%,#d8a040 70%,#e8b848 80%,#8a6020 92%,#0f1a30 100%)"></i><i style="left:0;top:24px;width:42px;height:3px;background:#060a18"></i><i style="left:0;top:40px;width:42px;height:1.5px;background:#060a18"></i><i style="left:2px;top:1px;width:3px;height:3px;background:#8a7040;border-radius:50%"></i><i style="left:8px;top:1.5px;width:14px;height:2px;background:#dde"></i><i style="left:11px;top:10px;width:20px;height:1.5px;background:#f0d0a0"></i><i style="left:14px;top:24.5px;width:20px;height:1.5px;background:#cdd"></i><i style="left:2px;top:29px;width:9px;height:9px;background:linear-gradient(135deg,#e04030,#f0b050);border-radius:2px"></i><i style="left:13px;top:30.5px;width:7px;height:1.5px;background:#ccc"></i><i style="left:31px;top:32px;width:8px;height:3px;background:#4ab898;border-radius:1px"></i><i style="left:2px;top:42px;width:9px;height:7px;background:linear-gradient(135deg,#6aa0e0,#f0e0a0);border-radius:2px"></i><i style="left:31px;top:44px;width:8px;height:3px;background:#4ab898;border-radius:1px"></i></div><i style="position:absolute;left:0;top:48px;width:17px;height:1px;background:#c8c8cc;display:block"></i></div></td><td>Annie</td><td>1.0</td><td>个人主页</td><td class="u">使用</td></tr>
</table></div>
</body></html>
